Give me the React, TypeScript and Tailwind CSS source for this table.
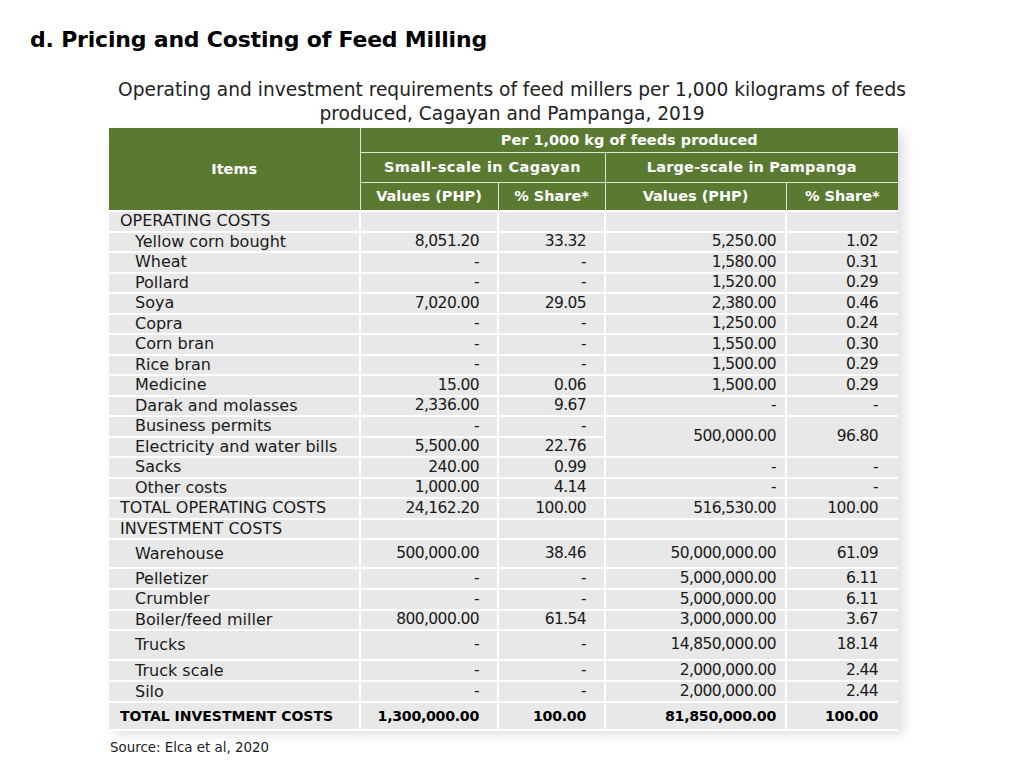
import React from "react";

type Row = {
  label: string;
  indent?: boolean;
  bold?: boolean;
  h: string;
  v1?: string;
  s1?: string;
  v2?: string;
  s2?: string;
  merge?: "start" | "skip";
};

const rows: Row[] = [
  { label: "OPERATING COSTS", h: "h-[20.5px]" },
  { label: "Yellow corn bought", indent: true, h: "h-[20.5px]", v1: "8,051.20", s1: "33.32", v2: "5,250.00", s2: "1.02" },
  { label: "Wheat", indent: true, h: "h-[20.5px]", v1: "-", s1: "-", v2: "1,580.00", s2: "0.31" },
  { label: "Pollard", indent: true, h: "h-[20.5px]", v1: "-", s1: "-", v2: "1,520.00", s2: "0.29" },
  { label: "Soya", indent: true, h: "h-[20.5px]", v1: "7,020.00", s1: "29.05", v2: "2,380.00", s2: "0.46" },
  { label: "Copra", indent: true, h: "h-[20.5px]", v1: "-", s1: "-", v2: "1,250.00", s2: "0.24" },
  { label: "Corn bran", indent: true, h: "h-[20.5px]", v1: "-", s1: "-", v2: "1,550.00", s2: "0.30" },
  { label: "Rice bran", indent: true, h: "h-[20.5px]", v1: "-", s1: "-", v2: "1,500.00", s2: "0.29" },
  { label: "Medicine", indent: true, h: "h-[20.5px]", v1: "15.00", s1: "0.06", v2: "1,500.00", s2: "0.29" },
  { label: "Darak and molasses", indent: true, h: "h-[20.5px]", v1: "2,336.00", s1: "9.67", v2: "-", s2: "-" },
  { label: "Business permits", indent: true, h: "h-[20.5px]", v1: "-", s1: "-", v2: "500,000.00", s2: "96.80", merge: "start" },
  { label: "Electricity and water bills", indent: true, h: "h-[20.5px]", v1: "5,500.00", s1: "22.76", merge: "skip" },
  { label: "Sacks", indent: true, h: "h-[20.5px]", v1: "240.00", s1: "0.99", v2: "-", s2: "-" },
  { label: "Other costs", indent: true, h: "h-[20.5px]", v1: "1,000.00", s1: "4.14", v2: "-", s2: "-" },
  { label: "TOTAL OPERATING COSTS", h: "h-[20.5px]", v1: "24,162.20", s1: "100.00", v2: "516,530.00", s2: "100.00" },
  { label: "INVESTMENT COSTS", h: "h-[20.5px]" },
  { label: "Warehouse", indent: true, h: "h-[29px]", v1: "500,000.00", s1: "38.46", v2: "50,000,000.00", s2: "61.09" },
  { label: "Pelletizer", indent: true, h: "h-[21px]", v1: "-", s1: "-", v2: "5,000,000.00", s2: "6.11" },
  { label: "Crumbler", indent: true, h: "h-[20.5px]", v1: "-", s1: "-", v2: "5,000,000.00", s2: "6.11" },
  { label: "Boiler/feed miller", indent: true, h: "h-[20.5px]", v1: "800,000.00", s1: "61.54", v2: "3,000,000.00", s2: "3.67" },
  { label: "Trucks", indent: true, h: "h-[30px]", v1: "-", s1: "-", v2: "14,850,000.00", s2: "18.14" },
  { label: "Truck scale", indent: true, h: "h-[21px]", v1: "-", s1: "-", v2: "2,000,000.00", s2: "2.44" },
  { label: "Silo", indent: true, h: "h-[21px]", v1: "-", s1: "-", v2: "2,000,000.00", s2: "2.44" },
  { label: "TOTAL INVESTMENT COSTS", bold: true, h: "h-[28px]", v1: "1,300,000.00", s1: "100.00", v2: "81,850,000.00", s2: "100.00" },
];

const cell = "border-[2px] border-white bg-[#e8e8e8] p-0 leading-none";
const head = "border-[1.5px] border-[#dfe8d3] bg-[#5b7a31] text-center leading-none";

const App = () => {
  return (
    <main className="w-[1024px] h-[768px] bg-white text-[#1a1a1a] font-['DejaVu_Sans',sans-serif] overflow-hidden">
      <h1 className="pt-[29px] pl-[30px] text-[22px] font-bold leading-none tracking-[-0.2px] text-black">
        d. Pricing and Costing of Feed Milling
      </h1>

      <p className="mt-[27px] text-center text-[18.6px] leading-[24px] text-[#222]">
        Operating and investment requirements of feed millers per 1,000 kilograms of feeds
        <br />
        produced, Cagayan and Pampanga, 2019
      </p>

      <div className="ml-[109px] mt-[2px] w-[789px] shadow-[6px_4px_10px_rgba(0,0,0,0.12)]">
        <table className="w-full border-collapse table-fixed text-[15.5px]">
          <colgroup>
            <col className="w-[251px]" />
            <col className="w-[138px]" />
            <col className="w-[107px]" />
            <col className="w-[181px]" />
            <col className="w-[112px]" />
          </colgroup>
          <thead className="text-white font-bold text-[14.5px]">
            <tr className="h-[24px]">
              <th rowSpan={3} className={`${head} border-t-0 border-l-0`}>
                Items
              </th>
              <th colSpan={4} className={`${head} border-t-0 border-r-0`}>
                Per 1,000 kg of feeds produced
              </th>
            </tr>
            <tr className="h-[30px]">
              <th colSpan={2} className={`${head} tracking-[0.4px]`}>
                Small-scale in Cagayan
              </th>
              <th colSpan={2} className={`${head} border-r-0 tracking-[0.2px]`}>
                Large-scale in Pampanga
              </th>
            </tr>
            <tr className="h-[29px]">
              <th className={head}>Values (PHP)</th>
              <th className={head}>% Share*</th>
              <th className={head}>Values (PHP)</th>
              <th className={`${head} border-r-0`}>% Share*</th>
            </tr>
          </thead>
          <tbody>
            {rows.map((r) => {
              const b = r.bold ? "font-bold text-black text-[14.2px] tracking-[-0.3px]" : "tracking-[-0.6px]";
              return (
                <tr key={r.label} className={r.h}>
                  <td
                    className={`${cell} border-l-0 whitespace-nowrap ${r.indent ? "pl-[26px]" : "pl-[11px]"} ${
                      r.bold ? "font-bold text-black text-[14px]" : "text-[16px]"
                    }`}
                  >
                    {r.label}
                  </td>
                  <td className={`${cell} text-right pr-[18px] ${b}`}>{r.v1}</td>
                  <td className={`${cell} text-right pr-[18px] ${b}`}>{r.s1}</td>
                  {r.merge === "skip" ? null : (
                    <>
                      <td rowSpan={r.merge === "start" ? 2 : 1} className={`${cell} text-right pr-[9px] ${b}`}>
                        {r.v2}
                      </td>
                      <td rowSpan={r.merge === "start" ? 2 : 1} className={`${cell} border-r-0 text-right pr-[20px] ${b}`}>
                        {r.s2}
                      </td>
                    </>
                  )}
                </tr>
              );
            })}
          </tbody>
        </table>
      </div>

      <p className="mt-[7px] pl-[110px] text-[13.4px] text-[#222]">Source: Elca et al, 2020</p>
    </main>
  );
};

export default App;
